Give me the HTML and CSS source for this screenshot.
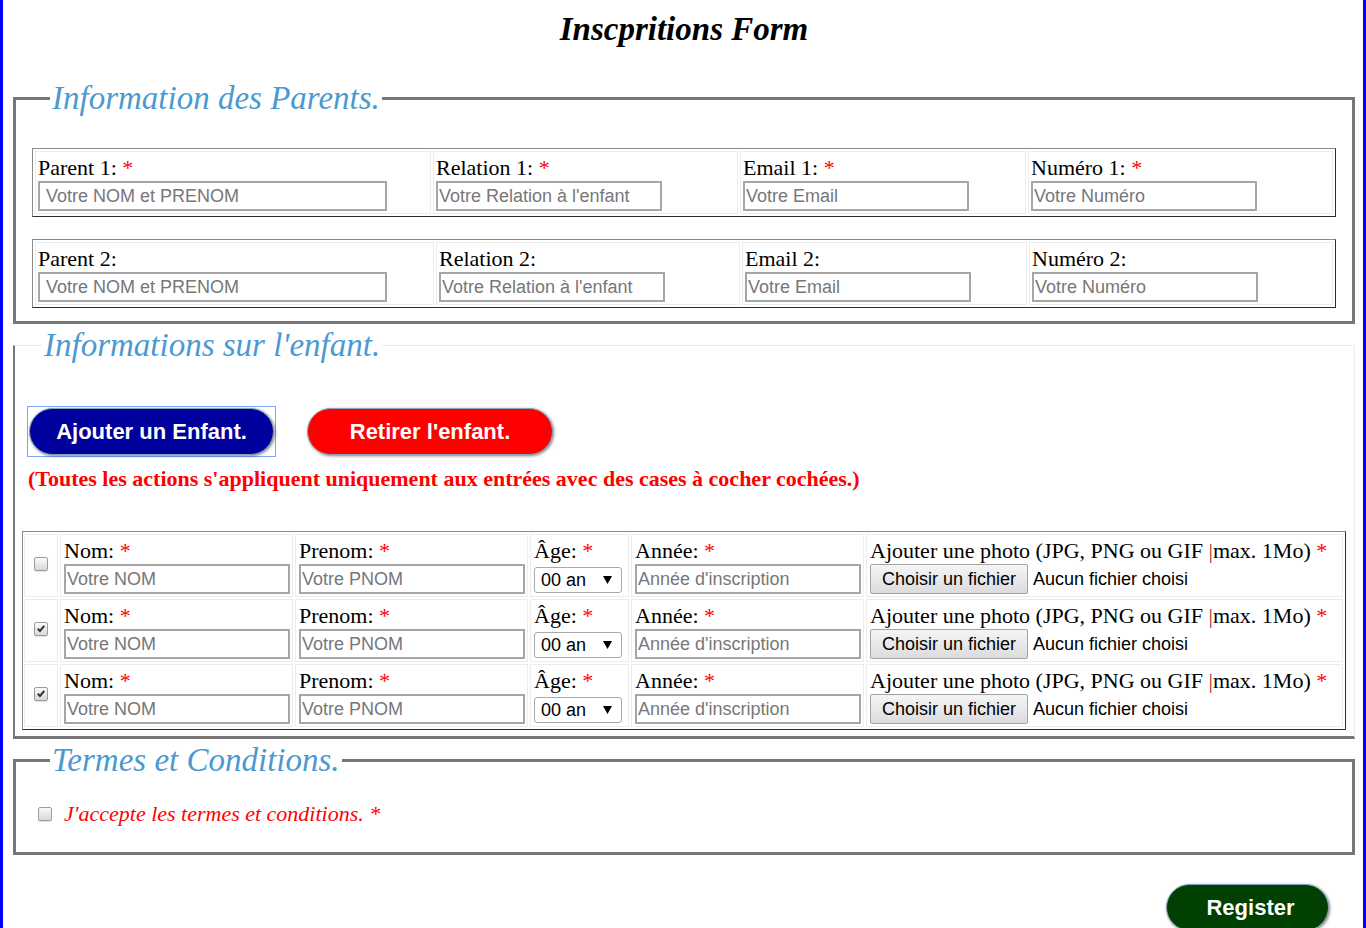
FILE: index.html
```html
<!DOCTYPE html>
<html lang="fr">
<head>
<meta charset="utf-8">
<title>Inscpritions Form</title>
<link rel="stylesheet" href="styles.css">
</head>
<body>
<div class="page">
  <h1 class="title">Inscpritions Form</h1>
  <form class="form">
    <fieldset class="box parents">
      <legend class="legend">Information des Parents.</legend>
      <div class="ptable p1">
        <div class="cell"><label class="lbl">Parent 1: <span class="req">*</span></label><input class="field pname" placeholder="Votre NOM et PRENOM"></div>
        <div class="cell"><label class="lbl">Relation 1: <span class="req">*</span></label><input class="field" placeholder="Votre Relation à l'enfant"></div>
        <div class="cell"><label class="lbl">Email 1: <span class="req">*</span></label><input class="field" placeholder="Votre Email"></div>
        <div class="cell"><label class="lbl">Numéro 1: <span class="req">*</span></label><input class="field" placeholder="Votre Numéro"></div>
      </div>
      <div class="ptable p2">
        <div class="cell"><label class="lbl">Parent 2:</label><input class="field pname" placeholder="Votre NOM et PRENOM"></div>
        <div class="cell"><label class="lbl">Relation 2:</label><input class="field" placeholder="Votre Relation à l'enfant"></div>
        <div class="cell"><label class="lbl">Email 2:</label><input class="field" placeholder="Votre Email"></div>
        <div class="cell"><label class="lbl">Numéro 2:</label><input class="field" placeholder="Votre Numéro"></div>
      </div>
    </fieldset>

    <fieldset class="box child">
      <legend class="legend legend-child">Informations sur l'enfant.</legend>
      <div class="actions">
        <span class="focus-ring"><button type="button" class="pill blue">Ajouter un Enfant.</button></span>
        <button type="button" class="pill red">Retirer l'enfant.</button>
      </div>
      <p class="note">(Toutes les actions s'appliquent uniquement aux entrées avec des cases à cocher cochées.)</p>
      <div class="ctable">
        <div class="ccell cbcell"><span class="cb"></span></div>
        <div class="ccell"><label class="lbl">Nom: <span class="req">*</span></label><input class="field" placeholder="Votre NOM"></div>
        <div class="ccell"><label class="lbl">Prenom: <span class="req">*</span></label><input class="field" placeholder="Votre PNOM"></div>
        <div class="ccell"><label class="lbl">Âge: <span class="req">*</span></label><div class="select"><span class="select-val">00 an</span><svg class="arrow" width="9" height="8" viewBox="0 0 9 8"><path d="M0 0H9L4.5 8Z" fill="#000"/></svg></div></div>
        <div class="ccell"><label class="lbl">Année: <span class="req">*</span></label><input class="field" placeholder="Année d'inscription"></div>
        <div class="ccell"><label class="lbl">Ajouter une photo (JPG, PNG ou GIF <span class="pipe">|</span>max. 1Mo) <span class="req">*</span></label><div class="file"><button type="button" class="file-btn">Choisir un fichier</button><span class="file-name">Aucun fichier choisi</span></div></div>

        <div class="ccell cbcell"><span class="cb"><svg width="13" height="13" viewBox="0 0 13 13"><path d="M3 6.8L5.4 9.2L10 3.6" fill="none" stroke="#333" stroke-width="2.2"/></svg></span></div>
        <div class="ccell"><label class="lbl">Nom: <span class="req">*</span></label><input class="field" placeholder="Votre NOM"></div>
        <div class="ccell"><label class="lbl">Prenom: <span class="req">*</span></label><input class="field" placeholder="Votre PNOM"></div>
        <div class="ccell"><label class="lbl">Âge: <span class="req">*</span></label><div class="select"><span class="select-val">00 an</span><svg class="arrow" width="9" height="8" viewBox="0 0 9 8"><path d="M0 0H9L4.5 8Z" fill="#000"/></svg></div></div>
        <div class="ccell"><label class="lbl">Année: <span class="req">*</span></label><input class="field" placeholder="Année d'inscription"></div>
        <div class="ccell"><label class="lbl">Ajouter une photo (JPG, PNG ou GIF <span class="pipe">|</span>max. 1Mo) <span class="req">*</span></label><div class="file"><button type="button" class="file-btn">Choisir un fichier</button><span class="file-name">Aucun fichier choisi</span></div></div>

        <div class="ccell cbcell"><span class="cb"><svg width="13" height="13" viewBox="0 0 13 13"><path d="M3 6.8L5.4 9.2L10 3.6" fill="none" stroke="#333" stroke-width="2.2"/></svg></span></div>
        <div class="ccell"><label class="lbl">Nom: <span class="req">*</span></label><input class="field" placeholder="Votre NOM"></div>
        <div class="ccell"><label class="lbl">Prenom: <span class="req">*</span></label><input class="field" placeholder="Votre PNOM"></div>
        <div class="ccell"><label class="lbl">Âge: <span class="req">*</span></label><div class="select"><span class="select-val">00 an</span><svg class="arrow" width="9" height="8" viewBox="0 0 9 8"><path d="M0 0H9L4.5 8Z" fill="#000"/></svg></div></div>
        <div class="ccell"><label class="lbl">Année: <span class="req">*</span></label><input class="field" placeholder="Année d'inscription"></div>
        <div class="ccell"><label class="lbl">Ajouter une photo (JPG, PNG ou GIF <span class="pipe">|</span>max. 1Mo) <span class="req">*</span></label><div class="file"><button type="button" class="file-btn">Choisir un fichier</button><span class="file-name">Aucun fichier choisi</span></div></div>
      </div>
    </fieldset>

    <fieldset class="box terms">
      <legend class="legend">Termes et Conditions.</legend>
      <label class="accept"><span class="cb"></span><span class="accept-text">J'accepte les termes et conditions. *</span></label>
    </fieldset>

    <div class="submit"><button type="button" class="pill green">Register</button></div>
  </form>
</div>
</body>
</html>
```

FILE: styles.css
```css
html { overflow: hidden; }
body {
  margin: 0;
  font-family: "Liberation Serif", "Times New Roman", serif;
  color: #000;
  background: #fff;
}
.page {
  min-height: 928px;
  box-sizing: border-box;
  border-left: 3px solid #0000ff;
  border-right: 3px solid #0000ff;
  padding: 0 8px 0 10px;
}
.title {
  margin: 0;
  padding-top: 11px;
  font-size: 33px;
  line-height: 37px;
  font-weight: bold;
  font-style: italic;
  text-align: center;
}
.form { margin: 0; }

.box {
  margin: 0;
  min-width: 0;
  border: 3px solid #777;
}
.legend {
  padding: 0 2px;
  margin-left: 18px;
  font-size: 33px;
  line-height: 37px;
  font-style: italic;
  color: #4b99d1;
}
.parents {
  margin-top: 32px;
  padding: 31px 16px 13px 16px;
}
.child {
  margin-top: 3px;
  border-top: 1px solid #ececec;
  border-right: 1px solid #ececec;
  border-left: 2px solid #777;
  border-bottom: 3px solid #777;
  padding: 42px 8px 6px 7px;
}
.legend-child { margin-left: 20px; }
.terms {
  margin-top: 3px;
  padding: 22px 16px 26px 16px;
}

.ptable {
  display: grid;
  gap: 2px;
  padding: 2px;
  border: 1px solid;
  border-color: #8a8a8a #2e2e2e #2e2e2e #8a8a8a;
}
.p1 { grid-template-columns: 396px 305px 286px 1fr; }
.p2 { grid-template-columns: 399px 304px 285px 1fr; margin-top: 22px; }
.cell {
  border: 1px solid #ececec;
  padding: 2px;
  min-width: 0;
}
.lbl {
  display: block;
  font-size: 22px;
  line-height: 27px;
  white-space: nowrap;
}
.req { color: #ff0000; }
.pipe { color: #a0302a; }

.field {
  display: block;
  box-sizing: border-box;
  width: 226px;
  height: 30px;
  margin: 0;
  padding: 0 1px;
  border: 2px solid #a6a6a6;
  font-family: "Liberation Sans", Arial, sans-serif;
  font-size: 18px;
  color: #000;
  background: #fff;
}
.field::placeholder { color: #777; }
.pname { width: 349px; padding-left: 6px; }

.actions {
  display: flex;
  align-items: center;
  gap: 31px;
  padding-left: 5px;
}
.focus-ring {
  display: inline-flex;
  padding: 1px;
  border: 1px solid #7aa8f5;
}
.pill {
  box-sizing: border-box;
  height: 47px;
  margin: 0;
  border: 1px solid #8ba3bf;
  border-radius: 24px;
  font-family: "Liberation Sans", Arial, sans-serif;
  font-size: 22px;
  font-weight: bold;
  color: #fff;
  box-shadow: 1px 1px 3px rgba(0, 0, 0, 0.5);
  padding: 0;
}
.blue { width: 245px; background: #00009c; }
.red { width: 246px; background: #ff0000; }
.green { width: 163px; background: #004000; padding-left: 6px; }

.note {
  margin: 9px 0 40px 6px;
  font-size: 22px;
  line-height: 25px;
  font-weight: bold;
  color: #ff0000;
  white-space: nowrap;
}

.ctable {
  display: grid;
  grid-template-columns: 34px 233px 233px 99px 233px 1fr;
  gap: 2px;
  padding: 2px 2px 2px 1px;
  border: 1px solid;
  border-color: #8a8a8a #2e2e2e #2e2e2e #8a8a8a;
}
.ccell {
  border: 1px solid #ececec;
  padding: 2px 2px 2px 3px;
  min-width: 0;
}
.cbcell {
  padding: 0;
  display: flex;
  align-items: center;
  justify-content: center;
}
.cb {
  display: inline-flex;
  box-sizing: border-box;
  width: 14px;
  height: 14px;
  border: 1px solid #9c9c9c;
  border-radius: 2px;
  background: linear-gradient(#fafafa, #d8d8d8);
  box-shadow: 0 1px 1px rgba(0, 0, 0, 0.12);
  align-items: center;
  justify-content: center;
}
.cbcell .cb { margin-top: -4px; }

.select {
  display: flex;
  align-items: center;
  justify-content: space-between;
  box-sizing: border-box;
  width: 88px;
  height: 26px;
  margin-top: 3px;
  padding: 0 9px 0 6px;
  border: 1px solid #a9a9a9;
  border-radius: 3px;
  font-family: "Liberation Sans", Arial, sans-serif;
  font-size: 18px;
}

.file {
  display: flex;
  align-items: center;
  gap: 5px;
}
.file-btn {
  box-sizing: border-box;
  width: 158px;
  height: 30px;
  margin: 0;
  padding: 0;
  border: 1px solid #a3a3a3;
  border-radius: 2px;
  background: linear-gradient(#f5f5f5, #dcdcdc);
  font-family: "Liberation Sans", Arial, sans-serif;
  font-size: 18px;
  color: #000;
}
.file-name {
  font-family: "Liberation Sans", Arial, sans-serif;
  font-size: 18px;
  white-space: nowrap;
}

.accept {
  display: flex;
  align-items: center;
  gap: 12px;
  padding-left: 6px;
  font-size: 22px;
  line-height: 25px;
  font-style: italic;
  color: #ff0000;
}

.submit {
  display: flex;
  justify-content: flex-end;
  padding-right: 26px;
  margin-top: 29px;
}
```
